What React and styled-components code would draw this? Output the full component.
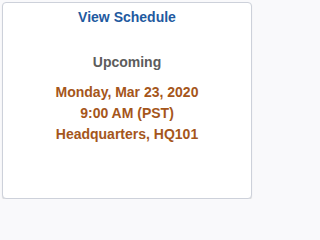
import React from "react";
import styled, { createGlobalStyle } from "styled-components";

const Global = createGlobalStyle`
  html, body { margin: 0; padding: 0; background: #f9f9fb; }
  body { font-family: Arial, "Liberation Sans", sans-serif; }
`;

const Tile = styled.div`
  box-sizing: border-box;
  margin: 2px 2px 0 2px;
  width: 250px;
  height: 197px;
  background: #ffffff;
  border: 1px solid #cdd1da;
  border-radius: 4px;
  box-shadow: 0 1px 1px rgba(0, 0, 0, 0.12);
  display: flex;
  flex-direction: column;
  align-items: center;
`;

const Title = styled.a`
  margin-top: 6px;
  font-size: 14px;
  line-height: 16px;
  font-weight: bold;
  color: #1f5aa0;
  text-decoration: none;
`;

const Status = styled.div`
  margin-top: 29px;
  font-size: 14px;
  line-height: 16px;
  font-weight: bold;
  color: #5c5c5c;
`;

const Details = styled.div`
  margin-top: 12px;
  display: flex;
  flex-direction: column;
  align-items: center;
`;

const Line = styled.div`
  font-size: 14px;
  line-height: 21px;
  font-weight: bold;
  color: #a5561b;
`;

export default function App() {
  return (
    <>
      <Global />
      <Tile>
        <Title href="#">View Schedule</Title>
        <Status>Upcoming</Status>
        <Details>
          <Line>Monday, Mar 23, 2020</Line>
          <Line>9:00 AM (PST)</Line>
          <Line>Headquarters, HQ101</Line>
        </Details>
      </Tile>
    </>
  );
}
